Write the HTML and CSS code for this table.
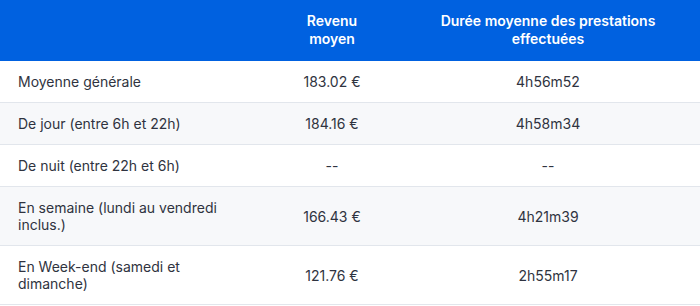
FILE: index.html
```html
<!DOCTYPE html>
<html lang="fr">
<head>
<meta charset="utf-8">
<link rel="stylesheet" href="styles.css">
</head>
<body>
<table class="stats">
  <colgroup>
    <col class="c-label">
    <col class="c-rev">
    <col class="c-dur">
  </colgroup>
  <thead>
    <tr>
      <th></th>
      <th>Revenu<br>moyen</th>
      <th class="dur">Durée moyenne des prestations effectuées</th>
    </tr>
  </thead>
  <tbody>
    <tr><td class="label">Moyenne générale</td><td>183.02 €</td><td class="dur">4h56m52</td></tr>
    <tr class="alt"><td class="label">De jour (entre 6h et 22h)</td><td>184.16 €</td><td class="dur">4h58m34</td></tr>
    <tr><td class="label">De nuit (entre 22h et 6h)</td><td>--</td><td class="dur">--</td></tr>
    <tr class="alt"><td class="label">En semaine (lundi au vendredi inclus.)</td><td>166.43 €</td><td class="dur">4h21m39</td></tr>
    <tr><td class="label">En Week-end (samedi et dimanche)</td><td>121.76 €</td><td class="dur">2h55m17</td></tr>
  </tbody>
</table>
</body>
</html>
```
FILE: styles.css
```css
html, body {
  margin: 0;
  padding: 0;
  background: #ffffff;
}
body {
  font-family: Inter, "Noto Sans", sans-serif;
  font-size: 14px;
  color: #2f3340;
}
.stats {
  width: 700px;
  border-collapse: collapse;
  table-layout: fixed;
}
.c-label { width: 264px; }
.c-rev { width: 136px; }
.c-dur { width: 300px; }
.stats th {
  background: #0061e0;
  color: #ffffff;
  font-weight: 600;
  line-height: 18px;
  padding: 12px 10px 13px;
  text-align: center;
}
.stats td {
  padding: 12px 10px;
  line-height: 17px;
  text-align: center;
  border-bottom: 1px solid #e2e6ec;
  vertical-align: middle;
}
.stats td.label {
  text-align: left;
  padding-left: 18px;
  padding-right: 18px;
}
.stats .dur {
  padding-left: 18px;
  padding-right: 22px;
}
.stats tr.alt td {
  background: #f7f8fa;
}
```
